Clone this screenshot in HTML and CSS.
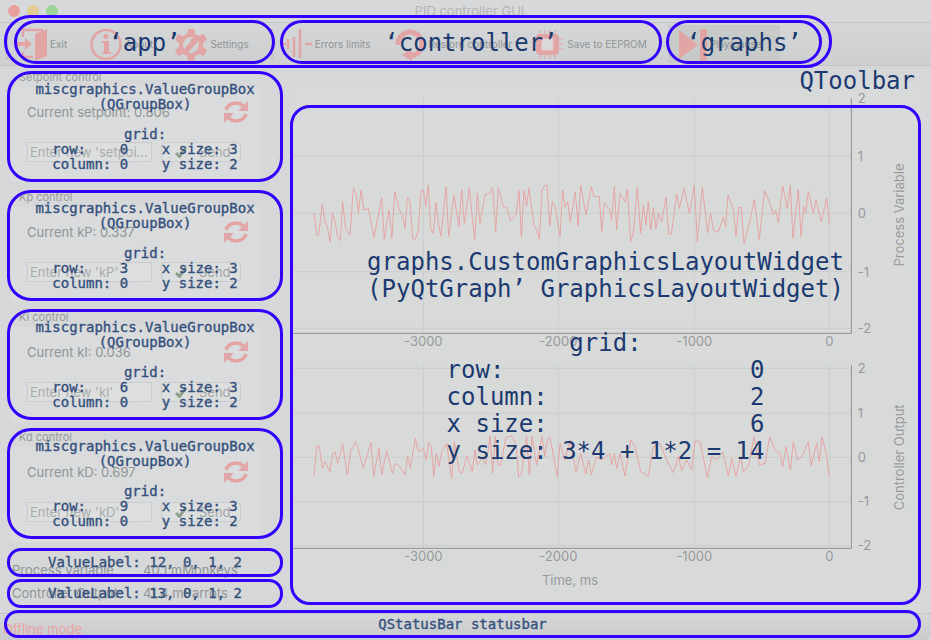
FILE: index.html
```html
<!DOCTYPE html>
<html>
  <head>
    <title>PID controller GUI</title>
    <link rel="stylesheet" href="styles.css">
  </head>
  <body>
    <div class="window">
      <header class="titlebar">
        <span class="light light-red"></span>
        <span class="light light-yellow"></span>
        <span class="light light-green"></span>
        <span class="title">PID controller GUI</span>
      </header>

      <nav class="toolbar">
        <div class="tool-sep tool-sep-first"></div>
        <div class="tool tool-exit">
          <svg class="icon" width="30" height="33" viewBox="0 0 30 33">
            <path class="icon-line" d="M6 9V2H26M6 24V29H16"/>
            <path class="icon-fill" d="M18 6L30 1V28L18 33Z"/>
            <path class="icon-fill" d="M0 14H8V10L15 16L8 22V18H0Z"/>
          </svg>
          <span>Exit</span>
        </div>
        <div class="tool">
          <svg class="icon" width="32" height="33" viewBox="0 0 32 33">
            <circle class="icon-line" cx="16" cy="16.5" r="14.5"/>
            <circle class="icon-fill" cx="16" cy="8.5" r="2.5"/>
            <path class="icon-fill" d="M12 13H19V24H21V26H12V24H14V15H12Z"/>
          </svg>
          <span>About</span>
        </div>
        <div class="tool">
          <svg class="icon" width="32" height="33" viewBox="0 0 32 33">
            <path class="icon-fill" fill-rule="evenodd" d="M13 1H19L20 6L24 8L29 6L32 12L28 15V19L32 22L29 28L24 26L20 28L19 33H13L12 28L8 26L3 28L0 22L4 19V15L0 12L3 6L8 8L12 6ZM16 9A8 8 0 1 0 16 25A8 8 0 1 0 16 9Z"/>
            <path class="icon-wrench" d="M11 23L18 15"/>
            <circle class="icon-fill" cx="19" cy="13" r="3.5"/>
          </svg>
          <span>Settings</span>
        </div>
        <div class="tool-sep"></div>
        <div class="tool">
          <svg class="icon" width="29" height="33" viewBox="0 0 29 33">
            <path class="icon-line" d="M0 16H3M5 11V21M11 9V29M17 1V30M22 16H29"/>
          </svg>
          <span>Errors limits</span>
        </div>
        <div class="tool">
          <svg class="icon" width="33" height="33" viewBox="0 0 33 33">
            <path class="icon-thick" d="M5 17A12 12 0 1 1 17 28"/>
            <path class="icon-fill" d="M19 20V33L9 27Z"/>
          </svg>
          <span>Restore controller</span>
        </div>
        <div class="tool tool-chip">
          <svg class="icon" width="31" height="33" viewBox="0 0 31 33">
            <path class="icon-pins" d="M0 11H31M0 16H31M0 21H31M8 2V31M13 2V31M18 2V31M23 2V31"/>
            <rect class="icon-fill" x="4" y="6" width="23" height="21" rx="4"/>
            <rect class="icon-hole" x="10" y="11" width="11" height="11"/>
          </svg>
          <span>Save to EEPROM</span>
        </div>
        <div class="tool tool-on">
          <svg class="icon" width="28" height="33" viewBox="0 0 28 33">
            <path class="icon-fill" d="M0 2L19 17L0 31Z"/>
            <rect class="icon-fill" x="21" y="1" width="7" height="32" rx="2"/>
          </svg>
          <span>Play/pause</span>
        </div>
      </nav>

      <main class="content">
        <aside class="controls">
          <section class="group">
            <div class="group-title">Setpoint control</div>
            <div class="group-frame">
              <div class="group-row">
                <span>Current setpoint: 0.806</span>
                <svg class="refresh" width="24" height="24" viewBox="0 0 24 24"><use href="#refresh-icon"/></svg>
              </div>
              <div class="group-row">
                <input class="value-input" type="text" placeholder="Enter new 'setpoint' value">
                <button class="send-btn"><svg width="12" height="12" viewBox="0 0 12 12"><use href="#check-icon"/></svg>Send</button>
              </div>
            </div>
          </section>
          <section class="group">
            <div class="group-title">Kp control</div>
            <div class="group-frame">
              <div class="group-row">
                <span>Current kP: 0.337</span>
                <svg class="refresh" width="24" height="24" viewBox="0 0 24 24"><use href="#refresh-icon"/></svg>
              </div>
              <div class="group-row">
                <input class="value-input" type="text" placeholder="Enter new 'kP'">
                <button class="send-btn"><svg width="12" height="12" viewBox="0 0 12 12"><use href="#check-icon"/></svg>Send</button>
              </div>
            </div>
          </section>
          <section class="group">
            <div class="group-title">Ki control</div>
            <div class="group-frame">
              <div class="group-row">
                <span>Current kI: 0.036</span>
                <svg class="refresh" width="24" height="24" viewBox="0 0 24 24"><use href="#refresh-icon"/></svg>
              </div>
              <div class="group-row">
                <input class="value-input" type="text" placeholder="Enter new 'kI'">
                <button class="send-btn"><svg width="12" height="12" viewBox="0 0 12 12"><use href="#check-icon"/></svg>Send</button>
              </div>
            </div>
          </section>
          <section class="group">
            <div class="group-title">Kd control</div>
            <div class="group-frame">
              <div class="group-row">
                <span>Current kD: 0.697</span>
                <svg class="refresh" width="24" height="24" viewBox="0 0 24 24"><use href="#refresh-icon"/></svg>
              </div>
              <div class="group-row">
                <input class="value-input" type="text" placeholder="Enter new 'kD'">
                <button class="send-btn"><svg width="12" height="12" viewBox="0 0 12 12"><use href="#check-icon"/></svg>Send</button>
              </div>
            </div>
          </section>
          <div class="readouts">
            <div class="readout"><span class="readout-name">Process variable</span><span>40.1 mMonkeys</span></div>
            <div class="readout"><span class="readout-name">Controller Output</span><span>41.4 mParrots</span></div>
          </div>
        </aside>

        <section class="graphs">
          <svg class="plot" width="625" height="260" viewBox="0 -30 1875 780">
            <path class="grid" d="M400 -6V700M805 -6V700M1213 -6V700M1618 -6V700M0 168H1684M0 340H1684M0 515H1684M0 685H1684"/>
            <path class="axis" d="M0 700H1684V-6"/>
            <polyline class="trace" points="72,340 80,405 86,405 97,313 105,365 112,380 120,425 127,338 135,365 143,410 151,422 158,305 167,385 180,405 190,265 198,280 205,340 213,270 222,330 235,325 252,412 275,293 283,418 297,330 306,415 314,275 328,330 337,345 345,385 352,293 360,305 368,415 376,418 385,390 393,272 400,270 407,320 415,255 422,385 430,400 438,308 445,370 453,408 468,260 476,410 492,285 507,380 515,268 523,370 538,265 554,420 562,280 570,370 585,285 600,278 608,262 617,395 625,265 640,320 650,322 662,362 678,345 687,272 694,410 702,272 710,318 717,265 732,375 740,390 748,418 756,270 764,256 771,256 779,378 787,305 795,320 810,410 818,270 825,322 833,305 841,365 856,275 864,378 872,256 888,345 904,260 912,290 928,290 935,395 943,308 960,330 965,360 973,258 980,390 990,280 1005,305 1012,268 1022,425 1030,400 1042,262 1052,400 1060,315 1068,375 1075,305 1082,390 1090,325 1098,385 1106,340 1115,365 1128,292 1136,403 1144,403 1160,282 1168,325 1182,265 1198,340 1213,256 1222,425 1237,262 1253,398 1262,340 1270,390 1285,397 1300,350 1307,380 1314,285 1330,325 1338,408 1346,322 1354,322 1362,430 1378,370 1393,298 1408,418 1424,272 1440,310 1450,345 1457,330 1465,368 1478,258 1492,325 1501,255 1509,415 1525,268 1533,410 1541,320 1547,340 1555,275 1570,340 1578,300 1594,365 1610,295 1618,372"/>
            <text class="tick" text-anchor="middle" x="400" y="737">-3000</text>
            <text class="tick" text-anchor="middle" x="805" y="737">-2000</text>
            <text class="tick" text-anchor="middle" x="1213" y="737">-1000</text>
            <text class="tick" text-anchor="middle" x="1618" y="737">0</text>
            <text class="tick" x="1703" y="8">2</text>
            <text class="tick" x="1703" y="183">1</text>
            <text class="tick" x="1703" y="355">0</text>
            <text class="tick" x="1703" y="530">-1</text>
            <text class="tick" x="1703" y="700">-2</text>
            <text class="tick" text-anchor="middle" transform="translate(1841 345) rotate(-90)">Process Variable</text>
          </svg>
          <svg class="plot plot-lower" width="625" height="234" viewBox="0 18 1875 702">
            <path class="grid" d="M400 45V595M805 45V595M1213 45V595M1618 45V595M0 55H1684M0 190H1684M0 322H1684M0 455H1684M0 587H1684"/>
            <path class="axis" d="M0 595H1684V45"/>
            <polyline class="trace" points="72,380 80,288 88,288 97,355 105,335 120,365 128,310 135,305 143,340 158,283 172,375 182,305 197,275 205,300 220,355 243,277 251,380 267,295 275,375 290,302 307,370 315,340 330,350 345,375 353,318 361,355 376,265 385,305 400,295 408,330 416,278 424,290 431,380 439,310 447,350 455,305 470,280 485,385 493,275 508,365 516,370 531,318 547,365 555,300 562,345 578,322 586,345 594,305 600,258 608,370 616,260 624,345 632,345 648,262 664,258 678,280 686,380 694,375 710,258 718,375 726,258 740,345 756,258 764,320 772,268 780,262 802,380 810,280 825,330 840,270 858,365 872,310 888,372 896,330 904,375 920,320 936,330 960,310 965,345 973,310 980,355 990,310 1005,378 1022,270 1035,290 1052,365 1075,380 1090,290 1110,280 1130,330 1150,368 1165,320 1175,362 1190,330 1205,360 1215,272 1230,275 1252,382 1265,320 1280,330 1298,305 1315,378 1325,325 1338,380 1352,320 1360,365 1375,350 1392,260 1408,345 1425,340 1439,262 1455,300 1470,310 1478,350 1488,290 1501,360 1510,275 1522,330 1535,320 1555,275 1563,348 1580,280 1588,335 1596,260 1610,315 1618,382"/>
            <text class="tick" text-anchor="middle" x="400" y="632">-3000</text>
            <text class="tick" text-anchor="middle" x="805" y="632">-2000</text>
            <text class="tick" text-anchor="middle" x="1213" y="632">-1000</text>
            <text class="tick" text-anchor="middle" x="1618" y="632">0</text>
            <text class="tick" text-anchor="middle" x="840" y="704">Time, ms</text>
            <text class="tick" x="1703" y="68">2</text>
            <text class="tick" x="1703" y="203">1</text>
            <text class="tick" x="1703" y="335">0</text>
            <text class="tick" x="1703" y="468">-1</text>
            <text class="tick" x="1703" y="600">-2</text>
            <text class="tick" text-anchor="middle" transform="translate(1841 322) rotate(-90)">Controller Output</text>
          </svg>
        </section>
      </main>

      <footer class="statusbar">Offline mode</footer>

      <!-- annotations drawn over the window -->
      <div class="note note-small note-toolbar"></div>
      <div class="note note-big note-bar note-app">‘app’</div>
      <div class="note note-big note-bar note-controller">‘controller’</div>
      <div class="note note-big note-bar note-graphs">‘graphs’</div>
      <div class="note-label">QToolbar</div>
      <div class="note note-small note-group note-g1">miscgraphics.ValueGroupBox
(QGroupBox)

grid:
row:    0    x size: 3
column: 0    y size: 2</div>
      <div class="note note-small note-group note-g2">miscgraphics.ValueGroupBox
(QGroupBox)

grid:
row:    3    x size: 3
column: 0    y size: 2</div>
      <div class="note note-small note-group note-g3">miscgraphics.ValueGroupBox
(QGroupBox)

grid:
row:    6    x size: 3
column: 0    y size: 2</div>
      <div class="note note-small note-group note-g4">miscgraphics.ValueGroupBox
(QGroupBox)

grid:
row:    9    x size: 3
column: 0    y size: 2</div>
      <div class="note note-small note-value note-v1">ValueLabel: 12, 0, 1, 2</div>
      <div class="note note-small note-value note-v2">ValueLabel: 13, 0, 1, 2</div>
      <div class="note note-big note-graph">graphs.CustomGraphicsLayoutWidget
(PyQtGraph’ GraphicsLayoutWidget)

grid:
row:                 0
column:              2
x size:              6
y size: 3*4 + 1*2 = 14</div>
      <div class="note note-small note-status">QStatusBar statusbar</div>
    </div>

    <svg class="icon-defs" width="0" height="0">
      <symbol id="refresh-icon" viewBox="0 0 24 24">
        <path class="refresh-arc" d="M2 10A10 9 0 0 1 19 6"/>
        <path class="refresh-head" d="M24 1V11H14Z"/>
        <path class="refresh-arc" d="M22 14A10 9 0 0 1 5 18"/>
        <path class="refresh-head" d="M0 23V13H10Z"/>
      </symbol>
      <symbol id="check-icon" viewBox="0 0 12 12">
        <path class="check-mark" d="M1 7L4.5 10.5L11 1.5"/>
      </symbol>
    </svg>
  </body>
</html>
```

FILE: styles.css
```css
* {
  box-sizing: border-box;
}

body {
  margin: 0;
  overflow: hidden;
  background-color: #d5d7d8;
  color: #919596;
  font-family: Inter, "Liberation Sans", sans-serif;
  font-size: 13px;
}

.window {
  position: relative;
  display: flex;
  flex-direction: column;
  width: 931px;
  height: 640px;
  overflow: hidden;
}

/* title bar */
.titlebar {
  display: flex;
  align-items: center;
  gap: 7px;
  flex: none;
  height: 22px;
  padding-left: 8px;
  background-color: #d7d8d9;
}

.light {
  width: 12px;
  height: 12px;
  border-radius: 50%;
}

.light-red { background-color: #e8a09c; }
.light-yellow { background-color: #e3cd94; }
.light-green { background-color: #9dd29a; }

.title {
  flex: 1;
  padding-right: 57px;
  text-align: center;
  color: #b4b6b7;
}

/* toolbar */
.toolbar {
  display: flex;
  align-items: center;
  flex: none;
  height: 44px;
  padding-left: 6px;
  background: linear-gradient(#d4d6d7, #cdcfd0);
  border-top: 1px solid #c3c5c6;
  border-bottom: 1px solid #c3c5c6;
  font-size: 10px;
}

.tool {
  display: flex;
  align-items: center;
  gap: 3px;
  margin-right: 22px;
}

.tool-exit {
  margin-right: 23px;
}

.tool-chip {
  gap: 4px;
  margin-left: -2px;
  margin-right: 21px;
}

.tool-sep {
  width: 13px;
  height: 30px;
  margin-right: -1px;
  border-left: 2px dotted #b9bbbc;
}

.tool-sep-first {
  width: 11px;
  margin-right: 0;
}

.tool-on {
  align-self: stretch;
  margin: 2px 0;
  padding: 0 18px 0 11px;
  background-color: #c8caca;
}

.icon-fill { fill: #e2a5a5; }
.icon-hole { fill: #d8dada; stroke: #eec9c9; }
.icon-line { fill: none; stroke: #e2a5a5; stroke-width: 2.5; }
.icon-pins { fill: none; stroke: #e2a5a5; stroke-width: 1; }
.icon-thick { fill: none; stroke: #e2a5a5; stroke-width: 5; }
.icon-wrench { fill: none; stroke: #e2a5a5; stroke-width: 5; stroke-linecap: round; }

/* left column */
.content {
  display: flex;
  flex: 1;
  min-height: 0;
}

.controls {
  flex: none;
  width: 290px;
  padding: 4px 0 0 10px;
}

.group {
  height: 120px;
}

.group-title {
  height: 15px;
  margin-left: 9px;
  line-height: 15px;
  font-size: 11px;
  color: #989b9c;
}

.group-frame {
  display: flex;
  flex-direction: column;
  gap: 18px;
  width: 250px;
  height: 95px;
  margin-top: 2px;
  padding: 13px 19px 0 17px;
  background-color: #d9dbdc;
  border-radius: 4px;
}

.group-row {
  display: flex;
  align-items: center;
  justify-content: space-between;
  height: 20px;
}

.group-row:first-child {
  height: 24px;
}

.refresh {
  margin-right: -7px;
}

.refresh-arc { fill: none; stroke: #e2a5a5; stroke-width: 3.5; }
.refresh-head { fill: #e2a5a5; }
.check-mark { fill: none; stroke: #8f9f8f; stroke-width: 3; }
.icon-defs { position: absolute; }

.value-input {
  width: 125px;
  height: 20px;
  padding: 0 0 0 2px;
  background-color: #dddfdf;
  border: 1px solid #c9cbcc;
  font-family: Inter, "Liberation Sans", sans-serif;
  font-size: 13px;
  text-overflow: ellipsis;
}

.value-input::placeholder {
  color: #a9acad;
}

.send-btn {
  display: flex;
  align-items: center;
  gap: 12px;
  width: 80px;
  height: 20px;
  padding: 0 0 0 13px;
  background-color: #dddfdf;
  border: 1px solid #c9cbcc;
  border-radius: 4px;
  color: #a3a6a7;
  font-family: Inter, "Liberation Sans", sans-serif;
  font-size: 13px;
}

.readouts {
  margin: 8px 0 0 2px;
}

.readout {
  display: flex;
  height: 23px;
  align-items: center;
}

.readout-name {
  width: 131px;
}

/* graphs */
.graphs {
  flex: none;
  width: 630px;
  margin-top: 15px;
  padding-top: 9px;
  background-color: #d8dada;
}

.plot {
  display: block;
}

.plot-lower {
  margin-top: 6px;
}

.grid { fill: none; stroke: #cbcdcd; stroke-width: 3; }
.axis { fill: none; stroke: #8f9192; stroke-width: 3; }
.trace { fill: none; stroke: #e59f9d; stroke-width: 2.7; }
.tick { font-size: 39px; fill: #97999a; }

/* status bar */
.statusbar {
  flex: none;
  height: 27px;
  padding: 7px 0 0 3px;
  background: linear-gradient(#d4d6d7, #c9cbcc);
  border-top: 1px solid #c3c5c6;
  border-bottom-right-radius: 6px;
  color: #eaa3a1;
  line-height: 17px;
}

/* annotations */
.note,
.note-label {
  position: absolute;
  color: #1c3a70;
  font-family: "DejaVu Sans Mono", monospace;
  white-space: pre;
}

.note {
  display: flex;
  align-items: center;
  justify-content: center;
  text-align: center;
  border: 3px solid #3300ff;
}

.note-small { font-size: 14px; line-height: 15px; color: #34507c; -webkit-text-stroke: 0.35px #34507c; }
.note-big { font-size: 24px; line-height: 27px; }
.note-label { right: 16px; top: 68px; font-size: 24px; line-height: 27px; }

.note-toolbar { left: 4px; top: 15px; width: 828px; height: 53px; border-radius: 26px; }
.note-bar { top: 20px; height: 44px; border-radius: 22px; padding-top: 2px; }
.note-app { left: 14px; width: 261px; }
.note-controller { left: 280px; width: 382px; }
.note-graphs { left: 666px; width: 156px; }

.note-group { left: 7px; width: 276px; height: 111px; border-radius: 24px; }
.note-g1 { top: 71px; }
.note-g2 { top: 190px; }
.note-g3 { top: 309px; }
.note-g4 { top: 428px; }

.note-value { left: 7px; width: 276px; height: 29px; border-radius: 14px; }
.note-v1 { top: 548px; }
.note-v2 { top: 579px; }

.note-graph { left: 290px; top: 105px; width: 631px; height: 500px; border-radius: 20px; padding-top: 3px; }
.note-status { left: 4px; top: 610px; width: 917px; height: 28px; border-radius: 14px; }
```
